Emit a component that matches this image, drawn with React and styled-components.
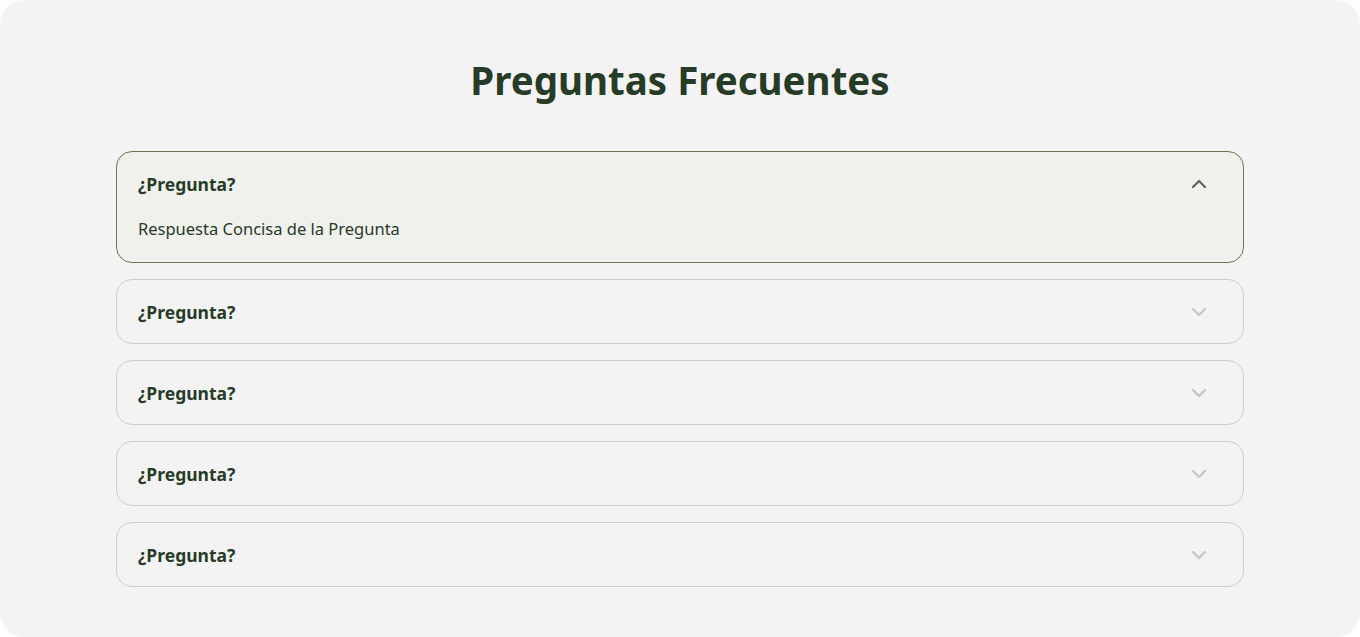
import React, { useState } from 'react';
import styled, { createGlobalStyle } from 'styled-components';

const GlobalStyle = createGlobalStyle`
  * { box-sizing: border-box; }
  body {
    margin: 0;
    background: #ffffff;
    font-family: "Noto Sans", "Open Sans", sans-serif;
  }
`;

const Page = styled.section`
  background: #f3f3f3;
  border-radius: 24px;
  height: 637px;
  padding: 51px 116px 0;
`;

const Title = styled.h2`
  margin: 0 0 42px;
  text-align: center;
  font-size: 38.5px;
  line-height: 58px;
  font-weight: 700;
  color: #263c27;
`;

const List = styled.div`
  display: flex;
  flex-direction: column;
  gap: 16px;
`;

const Item = styled.div`
  border: 1px solid ${p => (p.$open ? '#6f7552' : '#cfcfc4')};
  background: ${p => (p.$open ? '#f0f0ed' : '#f3f3f3')};
  border-radius: 16px;
`;

const Header = styled.button`
  all: unset;
  box-sizing: border-box;
  width: 100%;
  height: 63px;
  padding: 0 36px 0 21px;
  display: flex;
  align-items: center;
  justify-content: space-between;
  cursor: pointer;
`;

const Question = styled.span`
  font-size: 17.5px;
  font-weight: 700;
  color: #263c27;
`;

const Chevron = styled.svg`
  width: 16px;
  height: 16px;
  color: ${p => (p.$open ? '#5d6a46' : '#c6c6ba')};
`;

const Answer = styled.p`
  margin: 2px 0 0;
  padding: 0 21px 21px;
  font-size: 16.5px;
  line-height: 24px;
  color: #263c27;
`;

const faqs = [1, 2, 3, 4, 5].map(id => ({
  id,
  q: '¿Pregunta?',
  a: 'Respuesta Concisa de la Pregunta',
}));

export default function App() {
  const [open, setOpen] = useState(1);

  return (
    <>
      <GlobalStyle />
      <Page>
        <Title>Preguntas Frecuentes</Title>
        <List>
          {faqs.map(f => {
            const isOpen = open === f.id;
            return (
              <Item key={f.id} $open={isOpen}>
                <Header onClick={() => setOpen(isOpen ? null : f.id)}>
                  <Question>{f.q}</Question>
                  <Chevron $open={isOpen} viewBox="0 0 16 16" fill="none">
                    <path
                      d={isOpen ? 'M2 11L8 5L14 11' : 'M2 5L8 11L14 5'}
                      stroke="currentColor"
                      strokeWidth="2.2"
                      strokeLinecap="round"
                      strokeLinejoin="round"
                    />
                  </Chevron>
                </Header>
                {isOpen && <Answer>{f.a}</Answer>}
              </Item>
            );
          })}
        </List>
      </Page>
    </>
  );
}
